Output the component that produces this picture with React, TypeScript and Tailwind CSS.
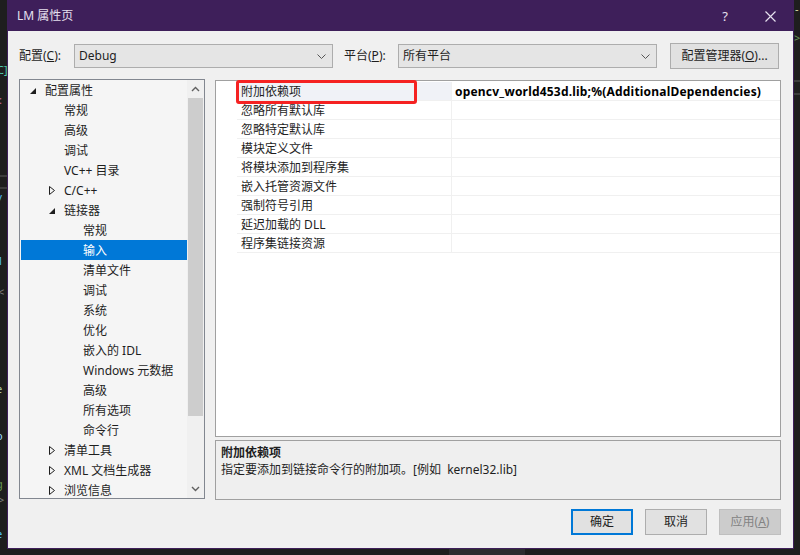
import React from "react";

const FONT = "font-['Noto_Sans','Noto_Sans_CJK_SC',sans-serif]";

type Node = { t: string; l: 0 | 1 | 2; a?: "open" | "closed"; sel?: boolean };

const tree: Node[] = [
  { t: "配置属性", l: 0, a: "open" },
  { t: "常规", l: 1 },
  { t: "高级", l: 1 },
  { t: "调试", l: 1 },
  { t: "VC++ 目录", l: 1 },
  { t: "C/C++", l: 1, a: "closed" },
  { t: "链接器", l: 1, a: "open" },
  { t: "常规", l: 2 },
  { t: "输入", l: 2, sel: true },
  { t: "清单文件", l: 2 },
  { t: "调试", l: 2 },
  { t: "系统", l: 2 },
  { t: "优化", l: 2 },
  { t: "嵌入的 IDL", l: 2 },
  { t: "Windows 元数据", l: 2 },
  { t: "高级", l: 2 },
  { t: "所有选项", l: 2 },
  { t: "命令行", l: 2 },
  { t: "清单工具", l: 1, a: "closed" },
  { t: "XML 文档生成器", l: 1, a: "closed" },
  { t: "浏览信息", l: 1, a: "closed" },
];

const indent = { 0: "pl-[9px]", 1: "pl-[28px]", 2: "pl-[47px]" };

const props = [
  "附加依赖项",
  "忽略所有默认库",
  "忽略特定默认库",
  "模块定义文件",
  "将模块添加到程序集",
  "嵌入托管资源文件",
  "强制符号引用",
  "延迟加载的 DLL",
  "程序集链接资源",
];

function Chevron({ up = false }: { up?: boolean }) {
  return (
    <svg width="9" height="6" viewBox="0 0 9 6">
      <path
        d={up ? "M1 5L4.5 1.5L8 5" : "M1 1L4.5 4.5L8 1"}
        fill="none"
        stroke="#606060"
        strokeWidth="1.4"
      />
    </svg>
  );
}

function Combo({ value }: { value: string }) {
  return (
    <div className="flex h-[24px] w-[259px] items-center justify-between border border-[#adadad] bg-[#e5e5e5] pl-[4px] pr-[6px] text-[#1e1e1e]">
      <span>{value}</span>
      <svg width="9" height="5" viewBox="0 0 9 5">
        <path d="M0.5 0.5L4.5 4.5L8.5 0.5" fill="none" stroke="#555" strokeWidth="1" />
      </svg>
    </div>
  );
}

function Arrow({ kind }: { kind?: "open" | "closed" }) {
  if (kind === "open")
    return (
      <svg width="6" height="6" viewBox="0 0 6 6">
        <polygon points="6,0 6,6 0,6" fill="#1e1e1e" />
      </svg>
    );
  if (kind === "closed")
    return (
      <svg width="6" height="9" viewBox="0 0 6 9">
        <polygon points="0.5,0.5 5.5,4.5 0.5,8.5" fill="none" stroke="#1e1e1e" strokeWidth="1" />
      </svg>
    );
  return null;
}

function Btn({ children, kind }: { children: React.ReactNode; kind?: "default" | "disabled" }) {
  const cls =
    kind === "default"
      ? "border-2 border-[#0078d7] bg-[#e1e1e1] text-[#1e1e1e]"
      : kind === "disabled"
        ? "border border-[#bfbfbf] bg-[#cccccc] text-[#838383]"
        : "border border-[#adadad] bg-[#e1e1e1] text-[#1e1e1e]";
  return (
    <div className={`flex h-[26px] w-[62px] items-center justify-center ${cls}`}>{children}</div>
  );
}

export default function App() {
  return (
    <div className={`flex h-[555px] w-[800px] overflow-hidden bg-[#1e1e1e] text-[12px] leading-none ${FONT}`}>
      {/* editor behind, left edge */}
      <div className="relative h-full w-[7px] overflow-hidden text-[11px]">
        <span className="absolute left-[-3px] top-[64px] text-[#4ec9b0]">C]</span>
        <span className="absolute left-[-1px] top-[94px] text-[#d16d9e]">:</span>
        <div className="absolute left-0 top-[175px] h-[2px] w-full bg-[#3c3c3c]" />
        <div className="absolute left-0 top-[187px] h-[2px] w-full bg-[#3c3c3c]" />
        <span className="absolute left-[-2px] top-[193px] text-[#4fc1ff]">/</span>
        <span className="absolute left-[-3px] top-[225px] text-[#9cdcfe]">l</span>
        <span className="absolute left-[-3px] top-[255px] text-[#4fc1ff]">1</span>
        <span className="absolute left-[-2px] top-[286px] text-[#808080]">&lt;</span>
        <span className="absolute left-[-4px] top-[383px] text-[#b5cea8]">e</span>
        <span className="absolute left-[-4px] top-[430px] text-[#9cdcfe]">o</span>
        <span className="absolute left-[-4px] top-[478px] text-[#6a9955]">g</span>
        <span className="absolute left-[-2px] top-[494px] text-[#808080]">&gt;</span>
        <span className="absolute left-[-4px] top-[528px] text-[#4fc1ff]">e</span>
      </div>

      <div className="flex w-[787px] flex-col">
        {/* dialog */}
        <div className="flex h-[549px] flex-col border border-[#3e1f5a]">
          <div className="flex h-[30px] items-center bg-[#3e1f5a] pl-[9px] pr-[17px] text-[#e6e0ee]">
            <span className="text-[12px]">LM 属性页</span>
            <span className="ml-auto text-[13px]">?</span>
            <svg className="ml-[37px]" width="11" height="11" viewBox="0 0 11 11">
              <path d="M0.5 0.5L10.5 10.5M10.5 0.5L0.5 10.5" stroke="#e6e0ee" strokeWidth="1.2" />
            </svg>
          </div>

          <div className="relative flex flex-1 flex-col bg-[#f0f0f0] pl-[11px] pr-[12px] pt-[12px] text-[#1e1e1e]">
            {/* config row */}
            <div className="flex h-[26px] items-center">
              <span className="w-[55px]">
                配置(<span className="underline">C</span>):
              </span>
              <Combo value="Debug" />
              <span className="ml-[11px] w-[54px]">
                平台(<span className="underline">P</span>):
              </span>
              <Combo value="所有平台" />
              <div className="ml-[13px] flex h-[26px] w-[109px] items-center justify-center border border-[#adadad] bg-[#e1e1e1]">
                配置管理器(<span className="underline">O</span>)...
              </div>
            </div>

            {/* main */}
            <div className="mt-[10px] flex">
              {/* tree */}
              <div className="flex h-[420px] w-[186px] overflow-hidden border border-[#828790] bg-[#f5f5f5]">
                <div className="flex-1 overflow-hidden pl-[1px]">
                  {tree.map((n, i) => (
                    <div
                      key={i}
                      className={`flex h-[20px] items-center pt-[1px] ${indent[n.l]} ${n.sel ? "bg-[#0078d7] text-white" : ""}`}
                    >
                      <div className="flex w-[15px] items-center">
                        <Arrow kind={n.a} />
                      </div>
                      <span>{n.t}</span>
                    </div>
                  ))}
                </div>
                <div className="flex w-[17px] flex-col items-center bg-[#f0f0f0]">
                  <div className="flex h-[18px] items-center">
                    <Chevron up />
                  </div>
                  <div className="h-[318px] w-[15px] bg-[#cdcdcd]" />
                  <div className="flex flex-1 items-end pb-[6px]">
                    <Chevron />
                  </div>
                </div>
              </div>

              {/* right side */}
              <div className="ml-[10px] mt-[1px] flex w-[566px] flex-col">
                <div className="relative h-[357px] border border-[#a0a0a0] bg-white pt-[1px]">
                  <div className="ml-[21px]">
                    {props.map((p, i) => (
                      <div key={i} className="flex h-[19px] border-b border-[#f0f0f0]">
                        <div
                          className={`flex w-[215px] items-center border-r border-[#f0f0f0] pl-[4px] pt-[2px] ${i === 0 ? "bg-[#f0f2f7]" : ""}`}
                        >
                          {p}
                        </div>
                        <div className="flex flex-1 items-center pl-[3px] pt-[2px] font-bold tracking-[0.2px] text-black">
                          {i === 0 ? "opencv_world453d.lib;%(AdditionalDependencies)" : ""}
                        </div>
                      </div>
                    ))}
                  </div>
                  {/* red annotation */}
                  <div className="absolute left-[20px] top-[-1px] h-[24px] w-[181px] rounded-[3px] border-[3px] border-[#f52222]" />
                </div>
                <div className="mt-[3px] h-[60px] border border-[#a0a0a0] bg-[#efefef] px-[5px] pt-[3px] leading-[17px]">
                  <div className="font-bold">附加依赖项</div>
                  <div className="whitespace-pre">指定要添加到链接命令行的附加项。[例如  kernel32.lib]</div>
                </div>
              </div>
            </div>

            {/* buttons */}
            <div className="mt-[9px] flex justify-end gap-[12px]">
              <Btn kind="default">确定</Btn>
              <Btn>取消</Btn>
              <Btn kind="disabled">
                应用(<span className="underline">A</span>)
              </Btn>
            </div>
          </div>
        </div>
        <div className="flex flex-1">
          <div className="ml-[442px] w-[76px] bg-[#2d2d30]" />
        </div>
      </div>

      {/* editor behind, right edge */}
      <div className="relative h-full flex-1 overflow-hidden text-[11px]">
        <span className="absolute left-[1px] top-[3px] text-[#dcdcaa]">-</span>
        <span className="absolute left-[0px] top-[32px] text-[#6a9955]">&gt;</span>
        <div className="absolute left-0 top-[80px] h-[2px] w-full bg-[#3c3c3c]" />
        <div className="absolute left-0 top-[93px] h-[2px] w-full bg-[#3c3c3c]" />
      </div>
    </div>
  );
}
